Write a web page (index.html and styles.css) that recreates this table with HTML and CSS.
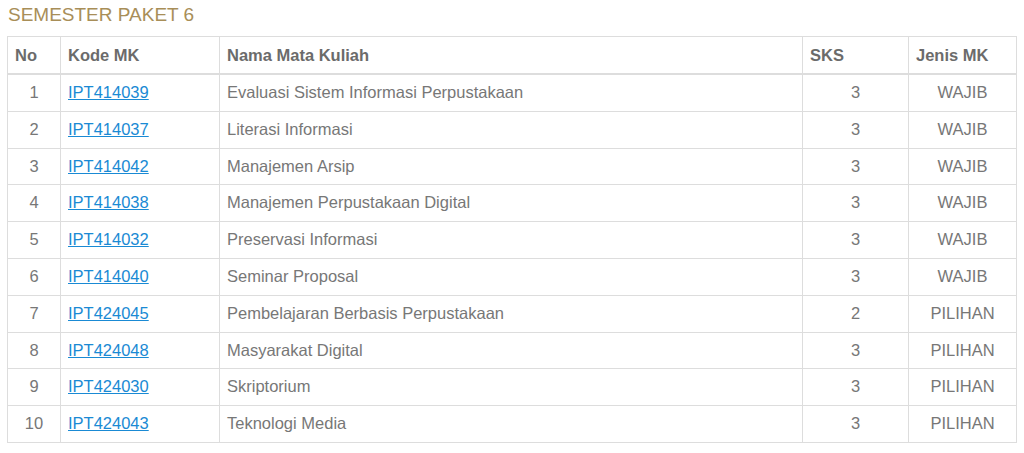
FILE: index.html
```html
<!DOCTYPE html>
<html lang="id">
<head>
  <meta charset="UTF-8">
  <meta name="viewport" content="width=device-width, initial-scale=1.0">
  <title>Semester Paket 6</title>
  <link rel="stylesheet" href="styles.css">
</head>
<body>
  <div class="container">
    <h4 class="semester-title">SEMESTER PAKET 6</h4>
    <table class="course-table">
      <colgroup>
        <col class="col-no">
        <col class="col-kode">
        <col class="col-nama">
        <col class="col-sks">
        <col class="col-jenis">
      </colgroup>
      <thead>
        <tr>
          <th>No</th>
          <th>Kode MK</th>
          <th>Nama Mata Kuliah</th>
          <th>SKS</th>
          <th>Jenis MK</th>
        </tr>
      </thead>
      <tbody>
        <tr><td class="center">1</td><td><a href="#">IPT414039</a></td><td>Evaluasi Sistem Informasi Perpustakaan</td><td class="center">3</td><td class="center">WAJIB</td></tr>
        <tr><td class="center">2</td><td><a href="#">IPT414037</a></td><td>Literasi Informasi</td><td class="center">3</td><td class="center">WAJIB</td></tr>
        <tr><td class="center">3</td><td><a href="#">IPT414042</a></td><td>Manajemen Arsip</td><td class="center">3</td><td class="center">WAJIB</td></tr>
        <tr><td class="center">4</td><td><a href="#">IPT414038</a></td><td>Manajemen Perpustakaan Digital</td><td class="center">3</td><td class="center">WAJIB</td></tr>
        <tr><td class="center">5</td><td><a href="#">IPT414032</a></td><td>Preservasi Informasi</td><td class="center">3</td><td class="center">WAJIB</td></tr>
        <tr><td class="center">6</td><td><a href="#">IPT414040</a></td><td>Seminar Proposal</td><td class="center">3</td><td class="center">WAJIB</td></tr>
        <tr><td class="center">7</td><td><a href="#">IPT424045</a></td><td>Pembelajaran Berbasis Perpustakaan</td><td class="center">2</td><td class="center">PILIHAN</td></tr>
        <tr><td class="center">8</td><td><a href="#">IPT424048</a></td><td>Masyarakat Digital</td><td class="center">3</td><td class="center">PILIHAN</td></tr>
        <tr><td class="center">9</td><td><a href="#">IPT424030</a></td><td>Skriptorium</td><td class="center">3</td><td class="center">PILIHAN</td></tr>
        <tr><td class="center">10</td><td><a href="#">IPT424043</a></td><td>Teknologi Media</td><td class="center">3</td><td class="center">PILIHAN</td></tr>
      </tbody>
    </table>
  </div>
</body>
</html>
```

FILE: styles.css
```css
body {
  font-family: "Liberation Sans", Arial, sans-serif;
  font-size: 16.5px;
  color: #777;
  margin: 0;
  padding: 0;
  background-color: #fff;
}

.container {
  padding: 0 8px 0 7px;
}

.semester-title {
  margin: 0;
  padding: 5px 0 0 1px;
  height: 36px;
  box-sizing: border-box;
  font-size: 19px;
  font-weight: normal;
  line-height: 20px;
  color: #a88e58;
}

.course-table {
  width: 1009px;
  border-collapse: collapse;
  table-layout: fixed;
  border: 1px solid #ddd;
}

.col-no { width: 53px; }
.col-kode { width: 159px; }
.col-nama { width: 583px; }
.col-sks { width: 106px; }
.col-jenis { width: 108px; }

.course-table th,
.course-table td {
  border: 1px solid #ddd;
  padding: 8px 7px;
  line-height: 19.8px;
  text-align: left;
  vertical-align: top;
}

.course-table th {
  color: #6b6b6b;
  font-weight: bold;
  line-height: 20px;
  border-bottom: 2px solid #ddd;
}

.course-table td.center {
  text-align: center;
}

.course-table a {
  color: #1a8ad4;
  text-decoration: underline;
}
```
